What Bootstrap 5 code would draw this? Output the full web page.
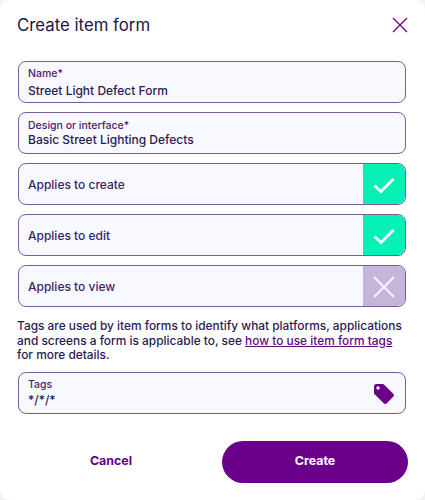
<!DOCTYPE html>
<html lang="en"><head><meta charset="utf-8"><title>Create item form</title>
<link href="https://cdn.jsdelivr.net/npm/bootstrap@5.3.0/dist/css/bootstrap.min.css" rel="stylesheet">
<style>
html,body{height:500px;overflow:hidden;background:#f3f3f5;}
body{font-family:Inter,"Liberation Sans",sans-serif;color:#20124d;}
.sheet{width:425px;height:500px;background:#fff;border-radius:10px;padding:0 17px 0 17px;}
.sheet-head{height:61px;padding-top:13px;}
.sheet-title{font-size:16.8px;font-weight:400;line-height:24px;margin:0;color:#1f1346;}
.close-x{background:none;border:0;padding:0;width:16px;height:16px;line-height:0;margin-top:4px;}
.fld{height:42px;margin:0 2px 9px 1px;border:1px solid #7a5c9c;border-radius:8px;background:#f8f8ff;overflow:hidden;}
.fld-label{font-size:10.5px;line-height:14px;color:#47236f;font-weight:500;}
.fld-label i{font-style:normal;color:#6a008a;}
.fld-val{font-size:12px;line-height:15px;color:#2a1a55;font-weight:500;}
.fld-stack{padding:0 9px;}
.name-val{margin-top:2px;}
.design-val{margin-top:-1px;}
.tog-label{font-size:12px;font-weight:500;color:#3a1d68;padding-left:9px;padding-top:2px;}
.tog-box{width:42px;height:100%;padding-top:2px;}
.tog-on{background:#04f0b4;}
.tog-off{background:#c4b5d9;}
.note{font-size:11.9px;line-height:14.5px;margin:12px 0 9px;color:#2a1a55;font-weight:500;}
.note a{color:#5f0a83;}
.foot{margin-top:27px;padding-left:1px;margin-right:-2px;}
.btn-cancel,.btn-create{height:42px;border-radius:21px;font-size:12.4px;font-weight:700;border:0;}
.btn-cancel{width:186px;color:#6a008a;background:transparent;margin-right:18px;}
.btn-create{width:186px;color:#fff;background:#6a008a;}
.btn-cancel:hover{color:#6a008a;}
.btn-create:hover{color:#fff;background:#6a008a;}
.tag-ic{margin-right:1px;margin-top:3px;}
</style></head>
<body>
<div class="sheet">
  <div class="sheet-head d-flex justify-content-between align-items-start">
    <h1 class="sheet-title">Create item form</h1>
    <button class="close-x" type="button" aria-label="Close"><svg width="16" height="16" viewBox="0 0 16 16"><path d="M1 1 15 15M15 1 1 15" stroke="#6a008a" stroke-width="1.4" fill="none"/></svg></button>
  </div>
  <div class="fld fld-stack d-flex flex-column justify-content-center">
    <div class="fld-label">Name<i>*</i></div>
    <div class="fld-val name-val">Street Light Defect Form</div>
  </div>
  <div class="fld fld-stack d-flex flex-column justify-content-center">
    <div class="fld-label">Design or interface<i>*</i></div>
    <div class="fld-val design-val">Basic Street Lighting Defects</div>
  </div>
  <div class="fld d-flex align-items-center justify-content-between">
    <span class="tog-label">Applies to create</span>
    <span class="tog-box tog-on d-flex align-items-center justify-content-center"><svg width="24" height="20" viewBox="0 0 24 20"><path d="M2.5 10.5 9 16.5 21.5 4" stroke="#f4fffb" stroke-width="3" fill="none"/></svg></span>
  </div>
  <div class="fld d-flex align-items-center justify-content-between">
    <span class="tog-label">Applies to edit</span>
    <span class="tog-box tog-on d-flex align-items-center justify-content-center"><svg width="24" height="20" viewBox="0 0 24 20"><path d="M2.5 10.5 9 16.5 21.5 4" stroke="#f4fffb" stroke-width="3" fill="none"/></svg></span>
  </div>
  <div class="fld d-flex align-items-center justify-content-between">
    <span class="tog-label">Applies to view</span>
    <span class="tog-box tog-off d-flex align-items-center justify-content-center"><svg width="24" height="24" viewBox="0 0 24 24"><path d="M2 2 22 22M22 2 2 22" stroke="#f1edf7" stroke-width="2.4" fill="none"/></svg></span>
  </div>
  <p class="note">Tags are used by item forms to identify what platforms, applications and screens a form is applicable to, see <a href="#">how to use item form tags</a> for more details.</p>
  <div class="fld fld-stack d-flex align-items-center justify-content-between mb-0">
    <div>
      <div class="fld-label">Tags</div>
      <div class="fld-val">*/*/*</div>
    </div>
    <svg width="22" height="22" viewBox="0 0 22 22" class="tag-ic"><path fill="#6a008a" fill-rule="evenodd" d="M1 3.5C1 2.1 2 1 3.5 1H9.6c.6 0 1.2.2 1.6.7l9 9c.9.9.9 2.2 0 3.1l-6.4 6.4c-.9.9-2.2.9-3.1 0l-9-9C1.300 11.700 1 11.100 1 10.500ZM5 3.300a1.700 1.700 0 1 0 0 3.400 1.700 1.700 0 0 0 0-3.400Z"/></svg>
  </div>
  <div class="foot d-flex">
    <button class="btn btn-cancel" type="button">Cancel</button>
    <button class="btn btn-create" type="button">Create</button>
  </div>
</div>
<script src="https://cdn.jsdelivr.net/npm/bootstrap@5.3.0/dist/js/bootstrap.bundle.min.js"></script>
</body></html>
